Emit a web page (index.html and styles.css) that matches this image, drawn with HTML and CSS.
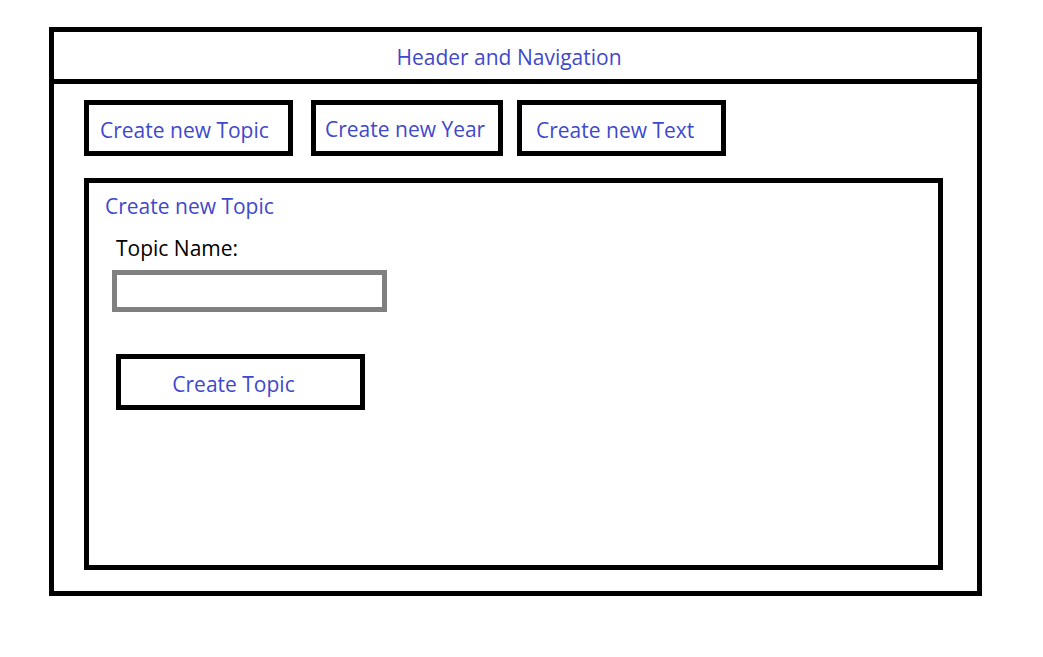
FILE: index.html
```html
<!DOCTYPE html>
<html>
<head>
<meta charset="utf-8">
<link rel="stylesheet" href="styles.css">
</head>
<body>
<div class="frame">
  <header class="header">Header and Navigation</header>
  <main class="content">
    <nav class="actions">
      <div class="btn btn-topic">Create new Topic</div>
      <div class="btn btn-year">Create new Year</div>
      <div class="btn btn-text">Create new Text</div>
    </nav>
    <section class="panel">
      <div class="panel-title">Create new Topic</div>
      <div class="label">Topic Name:</div>
      <div class="input"></div>
      <div class="submit">Create Topic</div>
    </section>
  </main>
</div>
</body>
</html>
```
FILE: styles.css
```css
* { box-sizing: border-box; }
body {
  margin: 0;
  background: #fff;
  font-family: "Open Sans", "Noto Sans", sans-serif;
  color: #3f48cc;
}
.frame {
  margin: 27px 0 0 49px;
  width: 933px;
  height: 569px;
  border: 5px solid #000;
  display: flex;
  flex-direction: column;
}
.header {
  height: 52px;
  border-bottom: 5px solid #000;
  display: flex;
  align-items: center;
  justify-content: center;
  font-size: 21px;
  line-height: 28px;
  padding: 3px 13px 0 0;
}
.content {
  padding: 16px 0 0 30px;
}
.actions {
  display: flex;
  height: 56px;
}
.btn {
  height: 56px;
  border: 5px solid #000;
  display: flex;
  align-items: center;
  font-size: 21px;
  line-height: 28px;
}
.btn-topic { width: 209px; padding-left: 11px; padding-top: 4px; }
.btn-year { width: 192px; margin-left: 18px; padding-left: 9px; padding-top: 1px; }
.btn-text { width: 209px; margin-left: 14px; padding-left: 14px; padding-top: 4px; }
.panel {
  margin-top: 22px;
  width: 859px;
  height: 392px;
  border: 5px solid #000;
  padding: 9px 0 0 16px;
  display: flex;
  flex-direction: column;
  align-items: flex-start;
}
.panel-title { font-size: 21px; line-height: 28px; }
.label {
  color: #000;
  font-size: 21px;
  line-height: 28px;
  margin: 14px 0 0 11px;
}
.input {
  margin: 8px 0 0 7px;
  width: 275px;
  height: 42px;
  border: 5px solid #808080;
}
.submit {
  margin: 42px 0 0 11px;
  width: 249px;
  height: 56px;
  border: 5px solid #000;
  display: flex;
  align-items: center;
  justify-content: center;
  font-size: 21px;
  line-height: 28px;
  padding: 4px 14px 0 0;
}
```
